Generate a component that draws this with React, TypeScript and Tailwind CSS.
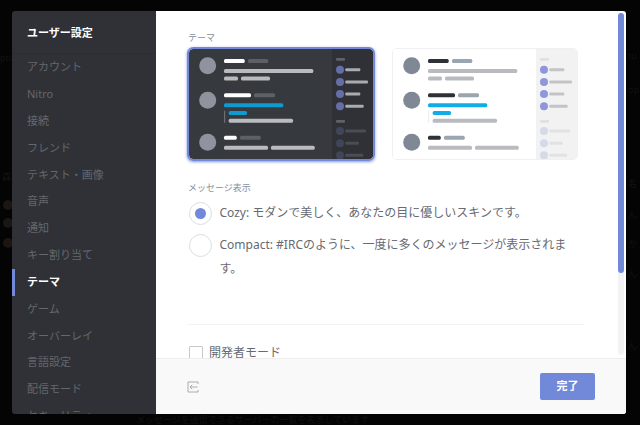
const sideItems = [
  "アカウント",
  "Nitro",
  "接続",
  "フレンド",
  "テキスト・画像",
  "音声",
  "通知",
  "キー割り当て",
  "テーマ",
  "ゲーム",
  "オーバーレイ",
  "言語設定",
  "配信モード",
  "セキュリティー",
];

const font = "font-['Noto_Sans','Noto_Sans_CJK_JP',sans-serif]";

// small chat mockup used for both theme cards
function ThemePreview({ dark }: { dark: boolean }) {
  const name = dark ? "#ffffff" : "#2e3136";
  const tag = dark ? "#5d6065" : "#99a5b0";
  const line = "#b9bbbe";
  const avatar = dark ? "#8e939d" : "#808896";
  const blue = dark ? "#0f9ad0" : "#10ade8";
  const head = dark ? "#5f6266" : "#e0e0e2";
  const member = dark ? "#646fa8" : "#8f97dc";
  const off = dark ? "#40465a" : "#d5d9ea";
  const offBar = dark ? "#4a4d52" : "#e2e2e4";
  const onBar = dark ? "#a9abae" : "#c4c4c6";
  return (
    <svg width="184" height="110" viewBox="0 0 184 110" className="block">
      <rect width="184" height="110" fill={dark ? "#36393e" : "#ffffff"} />
      <rect x="143" width="41" height="110" fill={dark ? "#2f3136" : "#f2f2f3"} />

      <circle cx="18.7" cy="16.7" r="8.5" fill={avatar} />
      <rect x="35" y="10" width="20.7" height="4" rx="1.5" fill={name} />
      <rect x="59" y="10" width="20.3" height="4" rx="1.5" fill={tag} />
      <rect x="35" y="20" width="89.3" height="4" rx="1.5" fill={line} />
      <rect x="35" y="27.5" width="14" height="4" rx="1.5" fill={line} />
      <rect x="52" y="27.5" width="29" height="4" rx="1.5" fill={line} />

      <circle cx="18.7" cy="51.3" r="8.5" fill={avatar} />
      <rect x="35" y="44.3" width="27" height="4" rx="1.5" fill={name} />
      <rect x="65" y="44.3" width="21" height="4" rx="1.5" fill={tag} />
      <rect x="35" y="54.3" width="59.3" height="4" rx="1.5" fill={blue} />
      <rect x="35" y="61.7" width="1.2" height="12" fill={dark ? "#6b6e73" : "#eeeeee"} />
      <rect x="39.7" y="62" width="18.3" height="4" rx="1.5" fill={blue} />
      <rect x="39.7" y="69.7" width="64.3" height="4" rx="1.5" fill={line} />

      <circle cx="18.7" cy="93.3" r="8.5" fill={avatar} />
      <rect x="35" y="86.7" width="12.7" height="4" rx="1.5" fill={name} />
      <rect x="51" y="86.7" width="20.7" height="4" rx="1.5" fill={tag} />
      <rect x="35" y="96.7" width="44" height="4" rx="1.5" fill={line} />
      <rect x="82" y="96.7" width="43.7" height="4" rx="1.5" fill={line} />

      <rect x="147" y="9" width="9" height="2.7" rx="1" fill={head} />
      <circle cx="151" cy="20.7" r="4" fill={member} />
      <rect x="156.3" y="19.2" width="15" height="3" rx="1" fill={onBar} />
      <circle cx="151" cy="33" r="4" fill={member} />
      <rect x="156.3" y="31.5" width="22.7" height="3" rx="1" fill={onBar} />
      <circle cx="151" cy="45" r="4" fill={member} />
      <rect x="156.3" y="43.5" width="15" height="3" rx="1" fill={onBar} />
      <circle cx="151" cy="57.3" r="4" fill={member} />
      <rect x="156.3" y="55.8" width="18.4" height="3" rx="1" fill={onBar} />

      <rect x="147" y="71" width="9" height="2.7" rx="1" fill={head} />
      <circle cx="151" cy="82" r="4" fill={off} />
      <rect x="156.3" y="80.5" width="20.7" height="3" rx="1" fill={offBar} />
      <circle cx="151" cy="94.3" r="4" fill={off} />
      <rect x="156.3" y="92.8" width="13.7" height="3" rx="1" fill={offBar} />
      <circle cx="151" cy="106.3" r="4" fill={off} />
      <rect x="156.3" y="104.8" width="18" height="3" rx="1" fill={offBar} />
    </svg>
  );
}

function BackdropScraps() {
  // dim text of the page behind the modal
  return (
    <>
      <span className="absolute left-0 top-[52px] text-[9px] leading-3 text-[#111214]">ptu</span>
      <span className="absolute left-[2px] top-[171px] text-[9px] leading-3 text-[#141416]">森</span>
      <span className="absolute left-[3px] top-[200px] size-[10px] rounded-full bg-[#1a1614]" />
      <span className="absolute left-[3px] top-[218px] size-[10px] rounded-full bg-[#1a1614]" />
      <span className="absolute left-[3px] top-[238px] size-[10px] rounded-full bg-[#1c1512]" />
      <span className="absolute left-[628px] top-[50px] text-[9px] leading-3 text-[#101113]">tu</span>
      <span className="absolute left-[628px] top-[84px] text-[9px] leading-3 text-[#101113]">op</span>
      <span className="absolute left-[628px] top-[178px] text-[9px] leading-3 text-[#121214]">名</span>
      <span className="absolute left-[628px] top-[209px] text-[9px] leading-3 text-[#121214]">ん</span>
      <span className="absolute left-[628px] top-[238px] text-[9px] leading-3 text-[#121214]">か</span>
      <span className="absolute left-[628px] top-[268px] text-[9px] leading-3 text-[#121214]">ん</span>
      <span className="absolute left-[628px] top-[340px] text-[9px] leading-3 text-[#121214]">ん</span>
      <span className="absolute left-[136px] top-[414px] text-[9px] leading-3 text-[#101113]">
        メッセージを送信できるサーバーの一覧を表示しています
      </span>
    </>
  );
}

export default function App() {
  return (
    <div className={`${font} relative flex h-[425px] w-[640px] overflow-hidden bg-[#040405] pl-3 pt-[11px]`}>
      <BackdropScraps />

      <div className="relative flex h-[403px] w-[614px] overflow-hidden rounded-[3px]">
        {/* Sidebar */}
        <div className="flex w-[144px] shrink-0 flex-col overflow-hidden bg-[#2f3136]">
          <div className="flex h-[43px] shrink-0 items-center border-b border-[#2b2d31] pl-[15px] pt-[3px] text-[11px] font-bold text-white">
            ユーザー設定
          </div>
          <div className="flex flex-col">
            {sideItems.map((item) => (
              <div
                key={item}
                className={`flex h-[26.85px] shrink-0 items-center border-l-[3px] pl-3 text-[11px] ${
                  item === "テーマ"
                    ? "border-[#7289da] font-bold text-white"
                    : item === "Nitro"
                      ? "border-transparent text-[10px] text-[#64676c]"
                      : "border-transparent text-[#64676c]"
                }`}
              >
                {item}
              </div>
            ))}
          </div>
        </div>

        {/* Main panel */}
        <div className="relative flex min-w-0 flex-1 flex-col bg-white">
          <div className="h-[347px] shrink-0 overflow-hidden pl-8 pr-[42px]">
            <div className="mt-[21px] text-[9px] leading-3 text-[#87909c]">テーマ</div>

            <div className="mt-[3px] flex items-start">
              <div className="-ml-[1px] overflow-hidden rounded-[6px] border-[2px] border-[#7289da] shadow-[0_1px_3px_rgba(114,137,218,0.9)]">
                <div className="overflow-hidden rounded-[4px]">
                  <ThemePreview dark />
                </div>
              </div>
              <div className="ml-[18px] mt-[2px] overflow-hidden rounded-[4px] shadow-[0_0_0_1px_#f0f0f1]">
                <ThemePreview dark={false} />
              </div>
            </div>

            <div className="mt-[21px] text-[9px] leading-3 text-[#87909c]">メッセージ表示</div>

            <div className="mt-[3px] flex h-[32px] items-center">
              <span className="ml-[0.5px] flex size-[23px] shrink-0 items-center justify-center rounded-full border border-[#dcddde]">
                <span className="size-[11px] rounded-full bg-[#7289da]" />
              </span>
              <span className="ml-2 text-[12px] text-[#666a72]">Cozy: モダンで美しく、あなたの目に優しいスキンです。</span>
            </div>

            <div className="mt-[4px] flex items-start">
              <span className="ml-[0.5px] mt-[1px] size-[23px] shrink-0 rounded-full border border-[#dcddde]" />
              <span className="ml-2 w-[350px] text-[12px] leading-6 text-[#666a72]">
                Compact: #IRCのように、一度に多くのメッセージが表示されます。
              </span>
            </div>

            <div className="mt-[43px] border-t border-[#f3f3f4]" />

            <div className="mt-5 flex items-center">
              <span className="ml-[1px] size-[14px] shrink-0 rounded-[1px] border border-[#c8c9cc]" />
              <span className="ml-[6px] text-[12px] leading-4 text-[#666a72]">開発者モード</span>
            </div>
          </div>

          {/* Footer */}
          <div className="flex h-14 shrink-0 items-center justify-between border-t border-[#eeeeef] bg-[#f9f9f9] pl-[31px] pr-[31px]">
            <svg width="12" height="12" viewBox="0 0 12 12" fill="none" stroke="#a0a3a8" strokeWidth="0.9">
              <path d="M11 3V1H1v10h10V9" />
              <path d="M10.5 6H3M5.2 3.8 3 6l2.2 2.2" />
            </svg>
            <button className="flex h-[27px] w-[55px] items-center justify-center rounded-[2px] bg-[#7289da] text-[11px] font-bold text-white">
              完了
            </button>
          </div>

          {/* Scrollbar */}
          <div className="absolute right-[2px] top-[2px] h-[342px] w-[6px] rounded-[3px] bg-[#f3f3f4]">
            <div className="h-[260px] rounded-[3px] bg-[#7289da]" />
          </div>
        </div>
      </div>
    </div>
  );
}
